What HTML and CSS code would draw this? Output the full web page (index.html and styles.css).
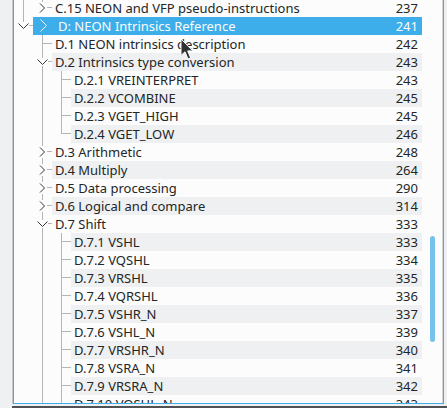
FILE: index.html
```html
<!DOCTYPE html>
<html>
<head>
<meta charset="utf-8">
<link rel="stylesheet" href="styles.css">
</head>
<body>
<svg class="defs" width="0" height="0" aria-hidden="true">
  <defs>
    <symbol id="pipe" viewBox="0 0 19 18"><rect x="9" y="0" width="1" height="18" fill="#b3b5b6"/></symbol>
    <symbol id="tee" viewBox="0 0 19 18"><rect x="9" y="0" width="1" height="18" fill="#b3b5b6"/><rect x="10" y="8" width="9" height="1" fill="#b3b5b6"/></symbol>
    <symbol id="elbow" viewBox="0 0 19 18"><rect x="9" y="0" width="1" height="9" fill="#b3b5b6"/><rect x="10" y="8" width="9" height="1" fill="#b3b5b6"/></symbol>
    <symbol id="closed-mid" viewBox="0 0 19 18"><rect x="9" y="0" width="1" height="3" fill="#b3b5b6"/><rect x="9" y="15" width="1" height="3" fill="#b3b5b6"/><rect x="14" y="8" width="5" height="1" fill="#b3b5b6"/><polyline points="7,4.5 11.5,9 7,13.5" fill="none" stroke="#31363b" stroke-width="1"/></symbol>
    <symbol id="closed-last" viewBox="0 0 19 18"><rect x="9" y="0" width="1" height="3" fill="#b3b5b6"/><rect x="14" y="8" width="5" height="1" fill="#b3b5b6"/><polyline points="7,4.5 11.5,9 7,13.5" fill="none" stroke="#31363b" stroke-width="1"/></symbol>
    <symbol id="open-mid" viewBox="0 0 19 18"><rect x="9" y="0" width="1" height="5" fill="#b3b5b6"/><rect x="9" y="13" width="1" height="5" fill="#b3b5b6"/><rect x="15" y="8" width="4" height="1" fill="#b3b5b6"/><polyline points="4.5,6.5 9.5,11.5 14.5,6.5" fill="none" stroke="#31363b" stroke-width="1"/></symbol>
    <symbol id="open-last" viewBox="0 0 19 18"><rect x="9" y="0" width="1" height="5" fill="#b3b5b6"/><rect x="15" y="8" width="4" height="1" fill="#b3b5b6"/><polyline points="4.5,6.5 9.5,11.5 14.5,6.5" fill="none" stroke="#31363b" stroke-width="1"/></symbol>
  </defs>
</svg>

<div class="window">
  <div class="frame">
    <div class="view">
      <div class="tree">
        <div class="row">
          <svg class="br"><use href="#pipe"/></svg>
          <svg class="br"><use href="#closed-last"/></svg>
          <div class="item"><span class="title">C.15 NEON and VFP pseudo-instructions</span><span class="page">237</span></div>
        </div>
        <div class="row">
          <svg class="br"><use href="#open-last"/></svg>
          <div class="item selected">
            <svg class="icon" width="16" height="16" viewBox="0 0 16 16"><polyline points="4.5,1.5 10.5,7.5 4.5,13.5" fill="none" stroke="#fcfcfc" stroke-width="1"/></svg>
            <span class="title">D: NEON Intrinsics Reference</span><span class="page">241</span>
          </div>
        </div>
        <div class="row">
          <span class="sp"></span>
          <svg class="br"><use href="#tee"/></svg>
          <div class="item"><span class="title">D.1 NEON intrinsics description</span><span class="page">242</span></div>
        </div>
        <div class="row">
          <span class="sp"></span>
          <svg class="br"><use href="#open-mid"/></svg>
          <div class="item alt"><span class="title">D.2 Intrinsics type conversion</span><span class="page">243</span></div>
        </div>
        <div class="row">
          <span class="sp"></span>
          <svg class="br"><use href="#pipe"/></svg>
          <svg class="br"><use href="#tee"/></svg>
          <div class="item"><span class="title">D.2.1 VREINTERPRET</span><span class="page">243</span></div>
        </div>
        <div class="row">
          <span class="sp"></span>
          <svg class="br"><use href="#pipe"/></svg>
          <svg class="br"><use href="#tee"/></svg>
          <div class="item alt"><span class="title">D.2.2 VCOMBINE</span><span class="page">245</span></div>
        </div>
        <div class="row">
          <span class="sp"></span>
          <svg class="br"><use href="#pipe"/></svg>
          <svg class="br"><use href="#tee"/></svg>
          <div class="item"><span class="title">D.2.3 VGET_HIGH</span><span class="page">245</span></div>
        </div>
        <div class="row">
          <span class="sp"></span>
          <svg class="br"><use href="#pipe"/></svg>
          <svg class="br"><use href="#elbow"/></svg>
          <div class="item alt"><span class="title">D.2.4 VGET_LOW</span><span class="page">246</span></div>
        </div>
        <div class="row">
          <span class="sp"></span>
          <svg class="br"><use href="#closed-mid"/></svg>
          <div class="item"><span class="title">D.3 Arithmetic</span><span class="page">248</span></div>
        </div>
        <div class="row">
          <span class="sp"></span>
          <svg class="br"><use href="#closed-mid"/></svg>
          <div class="item alt"><span class="title">D.4 Multiply</span><span class="page">264</span></div>
        </div>
        <div class="row">
          <span class="sp"></span>
          <svg class="br"><use href="#closed-mid"/></svg>
          <div class="item"><span class="title">D.5 Data processing</span><span class="page">290</span></div>
        </div>
        <div class="row">
          <span class="sp"></span>
          <svg class="br"><use href="#closed-mid"/></svg>
          <div class="item alt"><span class="title">D.6 Logical and compare</span><span class="page">314</span></div>
        </div>
        <div class="row">
          <span class="sp"></span>
          <svg class="br"><use href="#open-mid"/></svg>
          <div class="item"><span class="title">D.7 Shift</span><span class="page">333</span></div>
        </div>
        <div class="row">
          <span class="sp"></span>
          <svg class="br"><use href="#pipe"/></svg>
          <svg class="br"><use href="#tee"/></svg>
          <div class="item alt"><span class="title">D.7.1 VSHL</span><span class="page">333</span></div>
        </div>
        <div class="row">
          <span class="sp"></span>
          <svg class="br"><use href="#pipe"/></svg>
          <svg class="br"><use href="#tee"/></svg>
          <div class="item"><span class="title">D.7.2 VQSHL</span><span class="page">334</span></div>
        </div>
        <div class="row">
          <span class="sp"></span>
          <svg class="br"><use href="#pipe"/></svg>
          <svg class="br"><use href="#tee"/></svg>
          <div class="item alt"><span class="title">D.7.3 VRSHL</span><span class="page">335</span></div>
        </div>
        <div class="row">
          <span class="sp"></span>
          <svg class="br"><use href="#pipe"/></svg>
          <svg class="br"><use href="#tee"/></svg>
          <div class="item"><span class="title">D.7.4 VQRSHL</span><span class="page">336</span></div>
        </div>
        <div class="row">
          <span class="sp"></span>
          <svg class="br"><use href="#pipe"/></svg>
          <svg class="br"><use href="#tee"/></svg>
          <div class="item alt"><span class="title">D.7.5 VSHR_N</span><span class="page">337</span></div>
        </div>
        <div class="row">
          <span class="sp"></span>
          <svg class="br"><use href="#pipe"/></svg>
          <svg class="br"><use href="#tee"/></svg>
          <div class="item"><span class="title">D.7.6 VSHL_N</span><span class="page">339</span></div>
        </div>
        <div class="row">
          <span class="sp"></span>
          <svg class="br"><use href="#pipe"/></svg>
          <svg class="br"><use href="#tee"/></svg>
          <div class="item alt"><span class="title">D.7.7 VRSHR_N</span><span class="page">340</span></div>
        </div>
        <div class="row">
          <span class="sp"></span>
          <svg class="br"><use href="#pipe"/></svg>
          <svg class="br"><use href="#tee"/></svg>
          <div class="item"><span class="title">D.7.8 VSRA_N</span><span class="page">341</span></div>
        </div>
        <div class="row">
          <span class="sp"></span>
          <svg class="br"><use href="#pipe"/></svg>
          <svg class="br"><use href="#tee"/></svg>
          <div class="item alt"><span class="title">D.7.9 VRSRA_N</span><span class="page">342</span></div>
        </div>
        <div class="row">
          <span class="sp"></span>
          <svg class="br"><use href="#pipe"/></svg>
          <svg class="br"><use href="#tee"/></svg>
          <div class="item"><span class="title">D.7.10 VQSHL_N</span><span class="page">343</span></div>
        </div>
      </div>
      <div class="scroll"><div class="handle"></div></div>
    </div>
  </div>
  <div class="status"></div>
</div>

<svg class="cursor" width="14" height="24" viewBox="0 0 14 24">
  <path d="M1 1 L1 17.5 L5 13.8 L8 21 L10.6 19.9 L7.7 12.9 L12.8 12.9 Z" fill="#2f3336" stroke="#fcfcfc" stroke-width="1" stroke-linejoin="round"/>
</svg>
</body>
</html>
```
FILE: styles.css
```css
* {
  box-sizing: border-box;
}

html, body {
  margin: 0;
  padding: 0;
}

body {
  width: 447px;
  height: 408px;
  overflow: hidden;
  position: relative;
  background: #eff0f1;
  font-family: "Noto Sans", "DejaVu Sans", sans-serif;
  font-size: 13px;
  color: #232627;
}

.defs {
  position: absolute;
  width: 0;
  height: 0;
  overflow: hidden;
}

.window {
  padding-left: 12px;
}

.frame {
  width: 432px;
  border-left: 1px solid #c4c6c8;
}

.view {
  display: flex;
  height: 405px;
  margin-top: -1px;
  border: 1px solid #3daee9;
  border-top: none;
  background: #fcfcfc;
}

.tree {
  width: 408px;
  overflow: hidden;
  display: flex;
  flex-direction: column;
}

.row {
  display: flex;
  height: 18px;
  flex: none;
}

.br {
  width: 19px;
  height: 18px;
  flex: none;
  display: block;
}

.sp {
  width: 19px;
  flex: none;
}

.item {
  flex: 1;
  display: flex;
  align-items: center;
  min-width: 0;
  line-height: 18px;
  white-space: nowrap;
}

.item.alt {
  background: #eff0f1;
}

.item.selected {
  background: #3daee9;
  color: #fcfcfc;
}

.icon {
  flex: none;
  margin-left: 3px;
  margin-right: 3px;
  display: block;
}

.title {
  flex: 1;
  padding-left: 3px;
  overflow: hidden;
}

.page {
  flex: none;
  padding-right: 4px;
  text-align: right;
}

.scroll {
  width: 21px;
  flex: none;
  background: #fcfcfc;
  border-right: 1px solid #d3d5d6;
  padding-top: 237px;
  padding-left: 8px;
}

.handle {
  width: 5px;
  height: 106px;
  border-radius: 3px;
  background: #76c2ec;
}

.status {
  margin-top: 2px;
  height: 2px;
  background: #4f5154;
}

.cursor {
  position: absolute;
  left: 180px;
  top: 38px;
}
```
